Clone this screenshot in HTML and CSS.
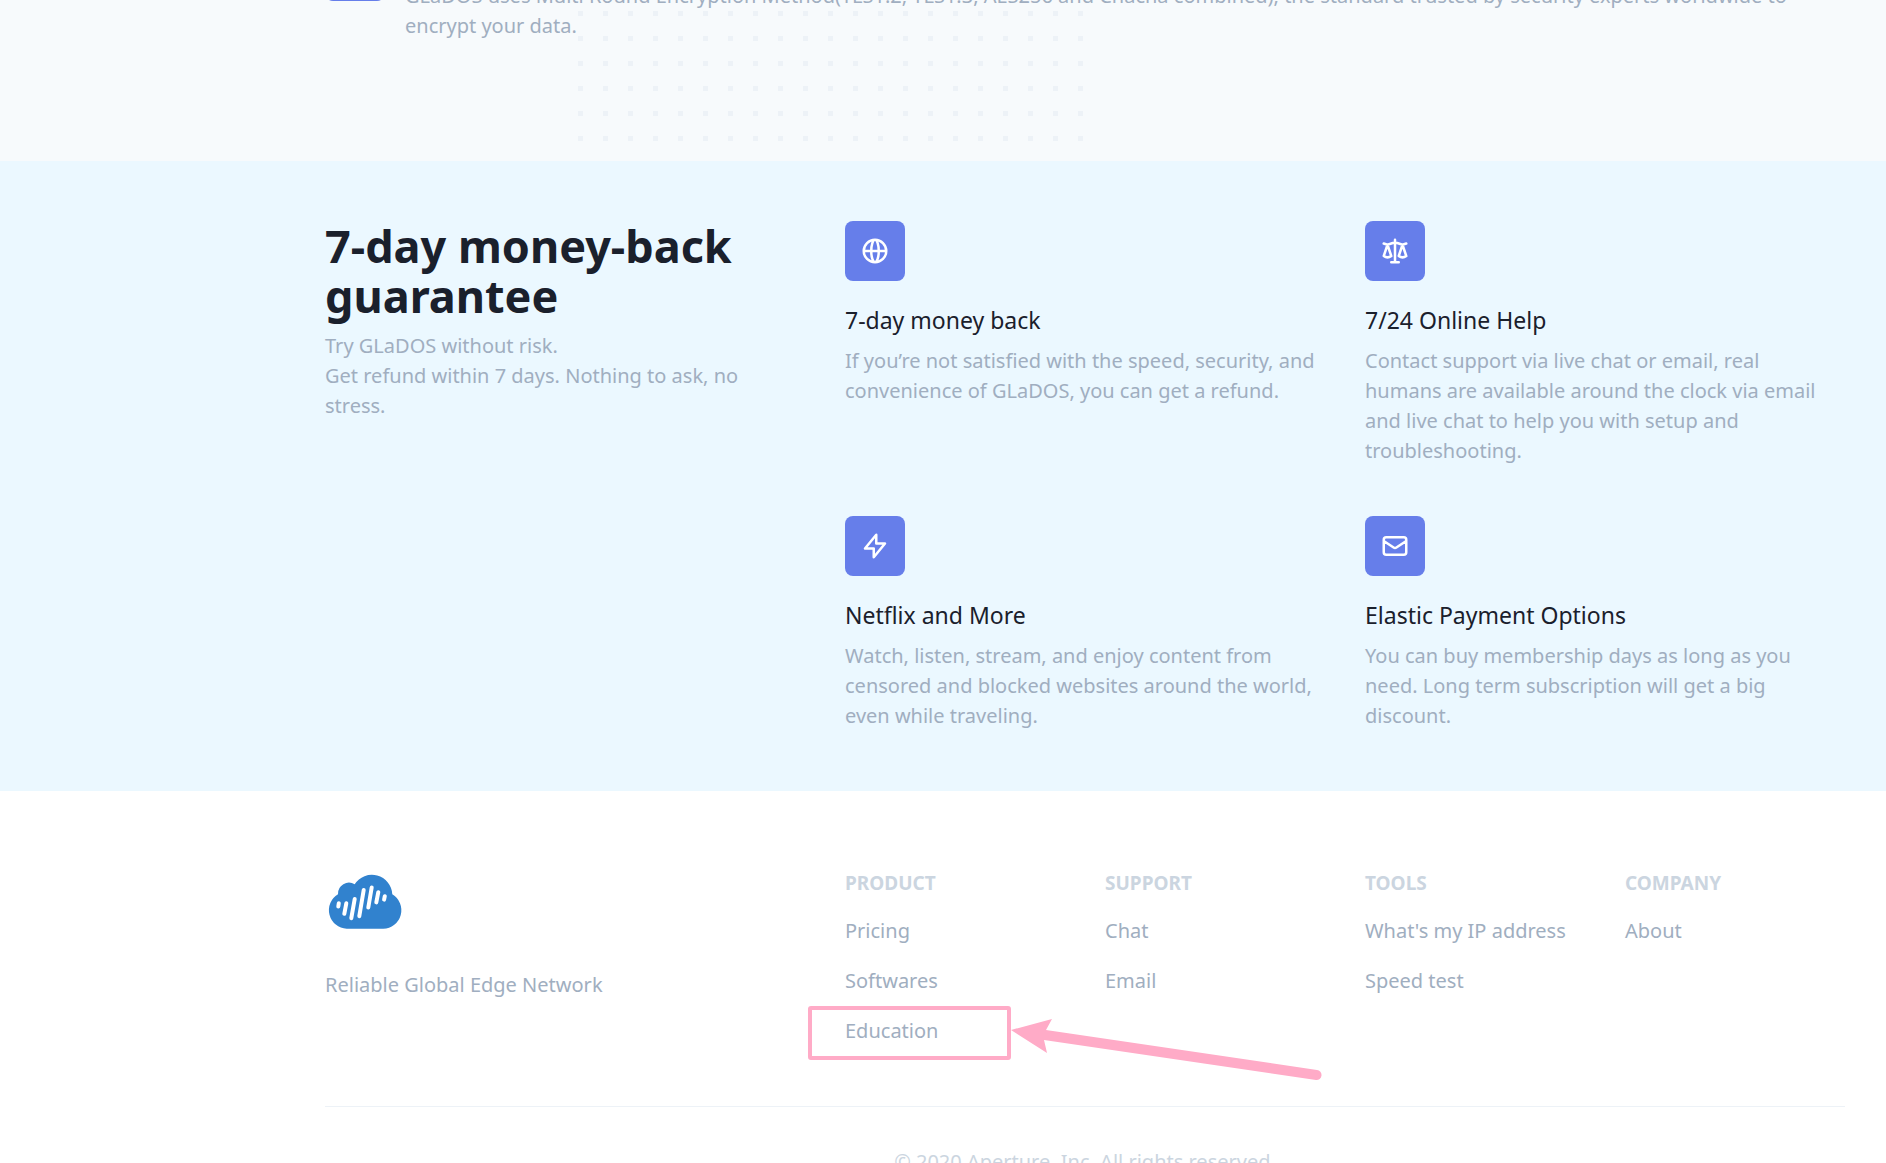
FILE: index.html
```html
<!DOCTYPE html>
<html lang="en">
<head>
<meta charset="utf-8">
<meta name="viewport" content="width=device-width, initial-scale=1">
<title>GLaDOS</title>
<link rel="stylesheet" href="styles.css">
</head>
<body>
<main>
  <section class="security">
    <svg class="dots" width="505" height="130" aria-hidden="true">
      <defs>
        <pattern id="dot" width="25" height="25" patternUnits="userSpaceOnUse"><rect width="5" height="5" fill="#edf2f7"/></pattern>
      </defs>
      <rect width="505" height="130" fill="url(#dot)"/>
    </svg>
    <div class="container security-row">
      <span class="badge"></span>
      <p class="text security-text">GLaDOS uses Multi Round Encryption Method(TLS1.2, TLS1.3, AES256 and Chacha combined), the standard trusted by security experts worldwide to encrypt your data.</p>
    </div>
  </section>

  <section class="guarantee">
    <div class="container columns">
      <div class="intro">
        <h2>7-day money-back guarantee</h2>
        <p class="text">Try GLaDOS without risk.<br>Get refund within 7 days. Nothing to ask, no stress.</p>
      </div>
      <div class="features">
        <article>
          <span class="badge"><svg viewBox="0 0 24 24"><path d="M21 12a9 9 0 01-9 9m9-9a9 9 0 00-9-9m9 9H3m9 9a9 9 0 01-9-9m9 9c1.657 0 3-4.03 3-9s-1.343-9-3-9m0 18c-1.657 0-3-4.03-3-9s1.343-9 3-9m-9 9a9 9 0 019-9"/></svg></span>
          <h3>7-day money back</h3>
          <p class="text">If you’re not satisfied with the speed, security, and convenience of GLaDOS, you can get a refund.</p>
        </article>
        <article>
          <span class="badge"><svg viewBox="0 0 24 24"><path d="M3 6l3 1m0 0l-3 9a5.002 5.002 0 006.001 0M6 7l3 9M6 7l6-2m6 2l3-1m-3 1l-3 9a5.002 5.002 0 006.001 0M18 7l3 9m-3-9l-6-2m0-2v2m0 16V5m0 16H9m3 0h3"/></svg></span>
          <h3>7/24 Online Help</h3>
          <p class="text">Contact support via live chat or email, real humans are available around the clock via email and live chat to help you with setup and troubleshooting.</p>
        </article>
        <article>
          <span class="badge"><svg viewBox="0 0 24 24"><path d="M13 10V3L4 14h7v7l9-11h-7z"/></svg></span>
          <h3>Netflix and More</h3>
          <p class="text">Watch, listen, stream, and enjoy content from censored and blocked websites around the world, even while traveling.</p>
        </article>
        <article>
          <span class="badge"><svg viewBox="0 0 24 24"><path d="M3 8l7.89 5.26a2 2 0 002.22 0L21 8M5 19h14a2 2 0 002-2V7a2 2 0 00-2-2H5a2 2 0 00-2 2v10a2 2 0 002 2z"/></svg></span>
          <h3>Elastic Payment Options</h3>
          <p class="text">You can buy membership days as long as you need. Long term subscription will get a big discount.</p>
        </article>
      </div>
    </div>
  </section>
</main>

<footer>
  <div class="container">
    <div class="columns footer-top">
      <div class="brand">
        <svg class="logo" viewBox="0 0 80 64" role="img" aria-label="GLaDOS">
          <path fill="#3182ce" d="M21.7 60.7A18.5 18.5 0 0 1 13 26.3A11 11 0 0 1 29.7 16.3A20.4 20.4 0 0 1 67.3 26.3A18.5 18.5 0 0 1 58.2 60.7Z"/>
          <path fill="none" stroke="#fff" stroke-width="4" stroke-linecap="round" d="M13.8 35.3l-.5 3.2M21.3 35.3l-2 10.5M29.7 31l-3.4 19.2M38.7 22l-4.4 26.2M46.7 19.5l-3.4 20M53.3 24.2l-2 10.2M59.8 28.2l-.7 3.4"/>
        </svg>
        <p class="text">Reliable Global Edge Network</p>
      </div>
      <nav class="links" aria-label="Footer">
        <div>
          <h4>PRODUCT</h4>
          <ul>
            <li><a href="#">Pricing</a></li>
            <li><a href="#">Softwares</a></li>
            <li class="marked"><a href="#">Education</a>
              <svg class="callout" width="520" height="80" aria-hidden="true">
                <rect x="4" y="4" width="199" height="50" rx="1" fill="none" stroke="#ffabc7" stroke-width="4"/>
                <path fill="#ffabc7" d="M205 26L246 15L240 26L511 66A5 5 0 0 1 510 76L238 36L241 49Z"/>
              </svg>
            </li>
          </ul>
        </div>
        <div>
          <h4>SUPPORT</h4>
          <ul><li><a href="#">Chat</a></li><li><a href="#">Email</a></li></ul>
        </div>
        <div>
          <h4>TOOLS</h4>
          <ul><li><a href="#">What's my IP address</a></li><li><a href="#">Speed test</a></li></ul>
        </div>
        <div>
          <h4>COMPANY</h4>
          <ul><li><a href="#">About</a></li></ul>
        </div>
      </nav>
    </div>
    <p class="copyright">© 2020 Aperture, Inc. All rights reserved.</p>
  </div>
</footer>
</body>
</html>
```
FILE: styles.css
```css
* { box-sizing: border-box; margin: 0; padding: 0; }

body {
  font-family: "Segoe UI", "Noto Sans", "Open Sans", sans-serif;
  font-size: 20px;
  line-height: 30px;
  color: #1a202c;
  background: #fff;
  overflow: hidden;
  height: 100vh;
}

ul { list-style: none; }
a { color: inherit; text-decoration: none; }

.container { padding: 0 41px 0 325px; }
.text { padding-right: 8px; color: #a0aec0; }

.badge {
  display: flex;
  align-items: center;
  justify-content: center;
  flex: none;
  width: 60px;
  height: 60px;
  border-radius: 8px;
  background: #667eea;
}
.badge svg {
  width: 30px;
  height: 30px;
  fill: none;
  stroke: #fff;
  stroke-width: 2;
  stroke-linecap: round;
  stroke-linejoin: round;
}

.security {
  position: relative;
  overflow: hidden;
  padding-bottom: 120px;
  background: #f7fafc;
}
.dots { position: absolute; left: 578px; top: 11px; }
.security-row {
  position: relative;
  display: flex;
  gap: 20px;
  margin-top: -59px;
}
.security-text { padding-top: 40px; }

.guarantee { padding: 60px 0; background: #ebf8ff; }
.columns {
  display: grid;
  grid-template-columns: minmax(0, 12fr) minmax(0, 25fr);
  gap: 40px;
}
h2 {
  font-size: 45px;
  line-height: 50px;
  font-weight: 700;
  margin-bottom: 10px;
}
.features {
  display: grid;
  grid-template-columns: 1fr 1fr;
  gap: 50px 40px;
}
h3 {
  margin: 24px 0 11px;
  font-size: 23px;
  line-height: 30px;
  font-weight: 400;
}

footer { padding-top: 77px; }
.footer-top { padding-bottom: 60px; border-bottom: 1px solid #edf2f7; }
.logo { display: block; width: 80px; height: 64px; margin-bottom: 38px; }
.links {
  display: grid;
  grid-template-columns: repeat(4, 1fr);
  gap: 40px;
}
h4 {
  font-size: 19px;
  line-height: 30px;
  font-weight: 700;
  color: #cbd5e0;
}
.links ul { display: grid; gap: 20px; margin-top: 18px; color: #a0aec0; }
.links li { white-space: nowrap; }
.marked { position: relative; }
.callout { position: absolute; left: -39px; top: -12px; }
.copyright { padding: 40px 0; text-align: center; color: #cbd5e0; }
```
